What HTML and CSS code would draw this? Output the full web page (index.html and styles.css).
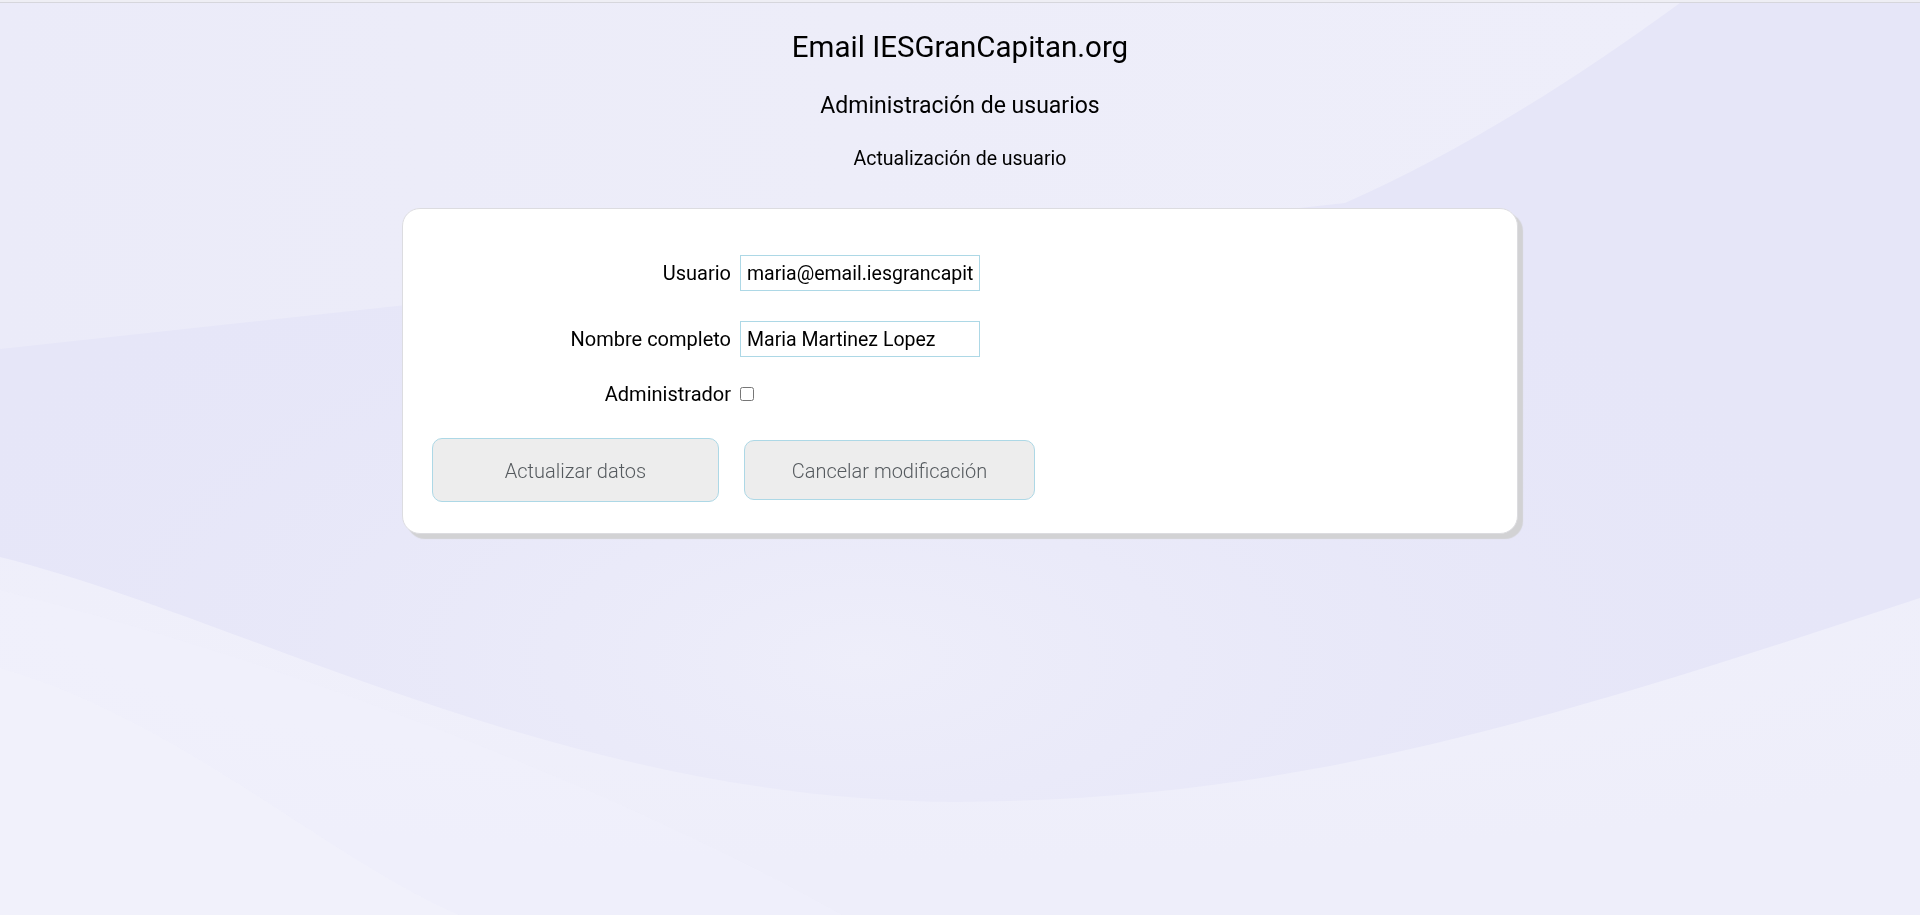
FILE: index.html
```html
<!DOCTYPE html>
<html lang="es">
<head>
<meta charset="utf-8">
<title>Email IESGranCapitan.org</title>
<link rel="stylesheet" href="styles.css">
</head>
<body>
<svg class="bg" viewBox="0 0 1920 915" preserveAspectRatio="none" aria-hidden="true">
  <defs>
    <linearGradient id="g1" x1="0" y1="0" x2="1" y2="0">
      <stop offset="0" stop-color="#ebebf9"/>
      <stop offset="0.5" stop-color="#ededf9"/>
      <stop offset="1" stop-color="#eeeefa"/>
    </linearGradient>
    <radialGradient id="g2" cx="0.45" cy="0.72" r="0.55">
      <stop offset="0" stop-color="#eeeefa"/>
      <stop offset="1" stop-color="#e6e6f8" stop-opacity="0"/>
    </radialGradient>
    <radialGradient id="g3" cx="0.5" cy="0.15" r="0.7">
      <stop offset="0" stop-color="#f1f1fb"/>
      <stop offset="1" stop-color="#eeeefa"/>
    </radialGradient>
  </defs>
  <rect x="0" y="0" width="1920" height="915" fill="#e6e6f8"/>
  <rect x="0" y="0" width="1920" height="915" fill="url(#g2)"/>
  <path d="M0,0 L1684,0 Q1500,135 1345,203 L0,349 Z" fill="url(#g1)"/>
  <path d="M0,557 C250,620 560,800 957,802 C1300,800 1550,720 1920,598 L1920,915 L0,915 Z" fill="url(#g3)"/>
  <path d="M0,590 C280,660 600,780 842,915 L0,915 Z" fill="#f0f0fb" opacity="0.6"/>
  <path d="M0,668 C180,720 330,860 459,915 L0,915 Z" fill="#f1f1fb" opacity="0.8"/>
</svg>
<div class="topbar"></div>
<header class="heading">
  <h1 class="title">Email IESGranCapitan.org</h1>
  <h2 class="subtitle">Administración de usuarios</h2>
  <h3 class="section">Actualización de usuario</h3>
</header>
<main class="card">
  <form class="form">
    <div class="row">
      <label class="label" for="usuario">Usuario</label>
      <input class="field" id="usuario" type="text" value="maria@email.iesgrancapitan.org">
    </div>
    <div class="row row-2">
      <label class="label" for="nombre">Nombre completo</label>
      <input class="field" id="nombre" type="text" value="Maria Martinez Lopez">
    </div>
    <div class="row row-3">
      <label class="label" for="admin">Administrador</label>
      <input class="check" id="admin" type="checkbox">
    </div>
    <div class="actions">
      <button class="btn btn-primary" type="button">Actualizar datos</button>
      <button class="btn btn-cancel" type="button">Cancelar modificación</button>
    </div>
  </form>
</main>
</body>
</html>
```

FILE: styles.css
```css
html, body {
  margin: 0;
  padding: 0;
}
body {
  font-family: Roboto, "Liberation Sans", sans-serif;
  color: #000;
  min-height: 915px;
  position: relative;
}
.bg {
  position: fixed;
  left: 0;
  top: 0;
  width: 100%;
  height: 100%;
  z-index: -1;
}
.topbar {
  height: 2px;
  background: #eeeef4;
  border-bottom: 1px solid #d6d6dc;
}
.heading {
  text-align: center;
}
.title {
  margin: 27px 0 0;
  font-size: 29.5px;
  line-height: 34px;
  font-weight: 400;
}
.subtitle {
  margin: 28px 0 0;
  font-size: 23px;
  line-height: 27px;
  font-weight: 400;
}
.section {
  margin: 28px 0 0;
  font-size: 19.5px;
  line-height: 23px;
  font-weight: 400;
}
.card {
  box-sizing: border-box;
  width: 1116px;
  margin: 38px auto 0;
  background: #fff;
  border: 1px solid #dcdce0;
  border-radius: 18px;
  box-shadow: 5px 5px 1px #d2d2d4;
  padding: 46px 29px 31px;
}
.form {
  display: flex;
  flex-direction: column;
}
.row {
  display: grid;
  grid-template-columns: 299px auto;
  column-gap: 9px;
  align-items: center;
  justify-content: start;
}
.row-2 {
  margin-top: 30px;
}
.row-3 {
  margin-top: 25px;
  height: 24px;
}
.label {
  text-align: right;
  font-size: 20px;
  line-height: 24px;
}
.field {
  box-sizing: border-box;
  width: 240px;
  height: 36px;
  border: 1px solid #add8e6;
  border-radius: 0;
  padding: 0 6px;
  font-family: Roboto, "Liberation Sans", sans-serif;
  font-size: 19.5px;
  color: #000;
  background: #fff;
  outline: none;
}
.check {
  width: 14px;
  height: 14px;
  margin: 0;
}
.actions {
  display: flex;
  align-items: center;
  gap: 25px;
  margin-top: 32px;
}
.btn {
  box-sizing: border-box;
  background: #ededed;
  border: 1px solid #add8e6;
  border-radius: 10px;
  font-family: Roboto, "Liberation Sans", sans-serif;
  font-weight: 300;
  font-size: 20px;
  color: #555a5e;
  padding: 1px 0 0;
}
.btn-primary {
  width: 287px;
  height: 64px;
}
.btn-cancel {
  width: 291px;
  height: 60px;
}
```
